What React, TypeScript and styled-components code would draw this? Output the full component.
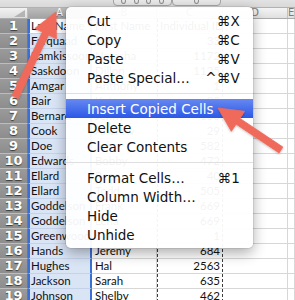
import React from "react";
import styled, { createGlobalStyle, css } from "styled-components";

const GlobalStyle = createGlobalStyle`
  html, body { margin: 0; padding: 0; background: #fff; overflow: hidden; }
  #root { width: 295px; height: 300px; }
`;

const COLS = "28px 64px 65px 66px 65px 1fr";

const Page = styled.div`
  position: relative;
  width: 295px;
  height: 300px;
  overflow: hidden;
  background: #fff;
  font-family: "Lato", "Liberation Sans", Arial, sans-serif;
`;

const Toolbar = styled.div`
  height: 6px;
  border-bottom: 1px solid #b2b2b2;
  background: linear-gradient(#e2e2e2, #d9d9d9);
  display: flex;
  align-items: flex-end;
  padding: 0 0 1px 113px;
  box-sizing: content-box;
  overflow: hidden;
`;

const ToolGroup = styled.div<{ $w: number }>`
  width: ${(p) => p.$w}px;
  height: 16px;
  flex-shrink: 0;
  box-sizing: border-box;
  border: 1px solid #a6a6a6;
  border-radius: 4px;
  background: linear-gradient(#f5f5f5, #e4e4e4);
  display: flex;
  align-items: flex-end;
  justify-content: space-evenly;
  padding-bottom: 1px;
`;

const ToolGlyph = styled.span`
  width: 5px;
  height: 7px;
  border: 1px solid #8d8d8d;
  border-radius: 50%;
  box-sizing: border-box;
`;

const Sheet = styled.div`
  display: flex;
  flex-direction: column;
`;

const HeaderRow = styled.div`
  display: grid;
  grid-template-columns: ${COLS};
  height: 11px;
  box-sizing: border-box;
  border-bottom: 1px solid #acacac;
`;

const Corner = styled.div`
  background: linear-gradient(#f2f2f2, #dedede);
  border-right: 1px solid #bdbdbd;
  display: flex;
  align-items: flex-end;
  justify-content: flex-end;
  padding: 0 2px 1px 0;
`;

const ColHead = styled.div<{ $selected?: boolean }>`
  box-sizing: border-box;
  border-right: 1px solid #c3c3c3;
  background: ${(p) =>
    p.$selected ? "linear-gradient(#bcbcbc, #a3a3a3)" : "linear-gradient(#f4f4f4, #e0e0e0)"};
  color: ${(p) => (p.$selected ? "#ffffff" : "#7c7c7c")};
  text-shadow: ${(p) => (p.$selected ? "0 1px 0 rgba(0,0,0,0.35)" : "none")};
  font: 10px/10px "DejaVu Sans", sans-serif;
  text-align: center;
  overflow: hidden;
`;

const Row = styled.div`
  display: grid;
  grid-template-columns: ${COLS};
  height: 15px;
  flex-shrink: 0;
`;

const RowHead = styled.div`
  box-sizing: border-box;
  background: linear-gradient(#9a9a9a, #8d8d8d);
  border-bottom: 1px solid #bdbdbd;
  border-right: 1px solid #777;
  color: #fff;
  font: bold 13px/14px "DejaVu Sans", sans-serif;
  text-align: center;
  text-shadow: 0 1px 1px rgba(0, 0, 0, 0.6);
`;

const Cell = styled.div<{
  $sel?: boolean;
  $active?: boolean;
  $num?: boolean;
  $copied?: boolean;
}>`
  box-sizing: border-box;
  border-bottom: 1px solid #d7d7d7;
  border-right: 1px solid #d7d7d7;
  padding: 0 3px;
  font-size: 11.5px;
  line-height: 14px;
  color: #111;
  white-space: nowrap;
  overflow: hidden;
  text-align: ${(p) => (p.$num ? "right" : "left")};
  ${(p) =>
    p.$sel &&
    css`
      background: ${p.$active ? "#ffffff" : "#d9e4f5"};
      border-left: 2px solid #3a6fd6;
      border-right: 2px solid #3a6fd6;
      border-bottom-color: #c4d2ea;
      padding-left: 1px;
    `}
  ${(p) =>
    p.$copied &&
    css`
      border-right: none;
      padding-right: 3px;
      background-image: repeating-linear-gradient(to bottom, #3c3c3c 0 3px, transparent 3px 5px),
        repeating-linear-gradient(to bottom, #3c3c3c 0 3px, transparent 3px 5px);
      background-size: 1px 100%, 1px 100%;
      background-position: left top, right top;
      background-repeat: no-repeat;
    `}
`;

const Menu = styled.div`
  position: absolute;
  left: 66px;
  top: 7px;
  width: 187px;
  box-sizing: border-box;
  padding: 4px 0;
  background: rgba(255, 255, 255, 0.95);
  border-radius: 5px;
  box-shadow: 0 0 0 1px rgba(0, 0, 0, 0.07), 0 5px 14px rgba(0, 0, 0, 0.33);
  font-family: "DejaVu Sans", sans-serif;
  font-size: 13.5px;
  color: #111;
`;

const Item = styled.div<{ $hl?: boolean }>`
  height: 19px;
  display: flex;
  align-items: center;
  justify-content: space-between;
  padding: 0 13px 0 21px;
  white-space: nowrap;
  ${(p) =>
    p.$hl &&
    css`
      background: linear-gradient(#6688f1, #2c58e7);
      color: #fff;
    `}
`;

const Shortcut = styled.span`
  letter-spacing: 0.2px;
`;

const Separator = styled.div`
  height: 12px;
  display: flex;
  align-items: center;
  &::after {
    content: "";
    flex: 1;
    height: 1px;
    background: #dfdfdf;
  }
`;

const Overlay = styled.svg`
  position: absolute;
  left: 0;
  top: 0;
  pointer-events: none;
`;

const data: [string, string, string][] = [
  ["Last Name", "First Name", "Individual ID"],
  ["Farquaad", "Lord", "33"],
  ["Ramkissoon", "Natasha", "1172"],
  ["Saskdoon", "Dillon", "1125"],
  ["Amgar", "Anthony", "1"],
  ["Bair", "Kate", "88"],
  ["Bernard", "Jenny", "150"],
  ["Cook", "Andrew", "29"],
  ["Doe", "John", "582"],
  ["Edwards", "Bobby", "472"],
  ["Ellard", "Rene", "40"],
  ["Ellard", "Todd", "505"],
  ["Goddelson", "Frank", "669"],
  ["Goddelson", "Lena", "669"],
  ["Greenwood", "Sam", "1"],
  ["Hands", "Jeremy", "684"],
  ["Hughes", "Hal", "2563"],
  ["Jackson", "Sarah", "635"],
  ["Johnson", "Shelby", "462"],
];

type MenuEntry = { label: string; key?: string; hl?: boolean } | "sep";

const menu: MenuEntry[] = [
  { label: "Cut", key: "⌘X" },
  { label: "Copy", key: "⌘C" },
  { label: "Paste", key: "⌘V" },
  { label: "Paste Special…", key: "^⌘V" },
  "sep",
  { label: "Insert Copied Cells", hl: true },
  { label: "Delete" },
  { label: "Clear Contents" },
  "sep",
  { label: "Format Cells…", key: "⌘1" },
  { label: "Column Width…" },
  { label: "Hide" },
  { label: "Unhide" },
];

export default function App() {
  return (
    <>
      <GlobalStyle />
      <Page>
        <Toolbar>
          <ToolGroup $w={59}>
            <ToolGlyph />
            <ToolGlyph />
            <ToolGlyph />
            <ToolGlyph />
          </ToolGroup>
          <ToolGroup $w={49}>
            <ToolGlyph />
          </ToolGroup>
        </Toolbar>
        <Sheet>
          <HeaderRow>
            <Corner>
              <svg width="11" height="7" viewBox="0 0 11 7">
                <polygon points="11,0 11,7 0,7" fill="#b4b4b4" />
              </svg>
            </Corner>
            <ColHead $selected>A</ColHead>
            <ColHead>B</ColHead>
            <ColHead>C</ColHead>
            <ColHead>D</ColHead>
            <ColHead>E</ColHead>
          </HeaderRow>
          {data.map((r, i) => (
            <Row key={i}>
              <RowHead>{i + 1}</RowHead>
              <Cell $sel $active={i === 0}>
                {r[0]}
              </Cell>
              <Cell>{r[1]}</Cell>
              <Cell $copied $num={i > 0}>
                {r[2]}
              </Cell>
              <Cell />
              <Cell />
            </Row>
          ))}
        </Sheet>
        <Menu>
          {menu.map((m, i) =>
            m === "sep" ? (
              <Separator key={i} />
            ) : (
              <Item key={i} $hl={m.hl}>
                <span>{m.label}</span>
                {m.key && <Shortcut>{m.key}</Shortcut>}
              </Item>
            )
          )}
        </Menu>
        <Overlay width="295" height="300" viewBox="0 0 295 300">
          <defs>
            <filter id="sh" x="-20%" y="-20%" width="140%" height="140%">
              <feDropShadow dx="0" dy="1" stdDeviation="0.8" floodColor="#000" floodOpacity="0.25" />
            </filter>
          </defs>
          <polygon
            points="56,12 56.4,38.8 48.6,35.1 18.2,98.5 11.9,95.5 42.3,32.1 34.8,28.4"
            fill="#f06a5b"
            stroke="#f06a5b"
            strokeWidth="0.8"
            strokeLinejoin="round"
            filter="url(#sh)"
          />
          <polygon
            points="218,108 244.7,111.3 239.9,118.4 282.9,147.1 279.1,152.9 236.1,124.2 231.3,131.3"
            fill="#f06a5b"
            stroke="#f06a5b"
            strokeWidth="0.8"
            strokeLinejoin="round"
            filter="url(#sh)"
          />
        </Overlay>
      </Page>
    </>
  );
}
